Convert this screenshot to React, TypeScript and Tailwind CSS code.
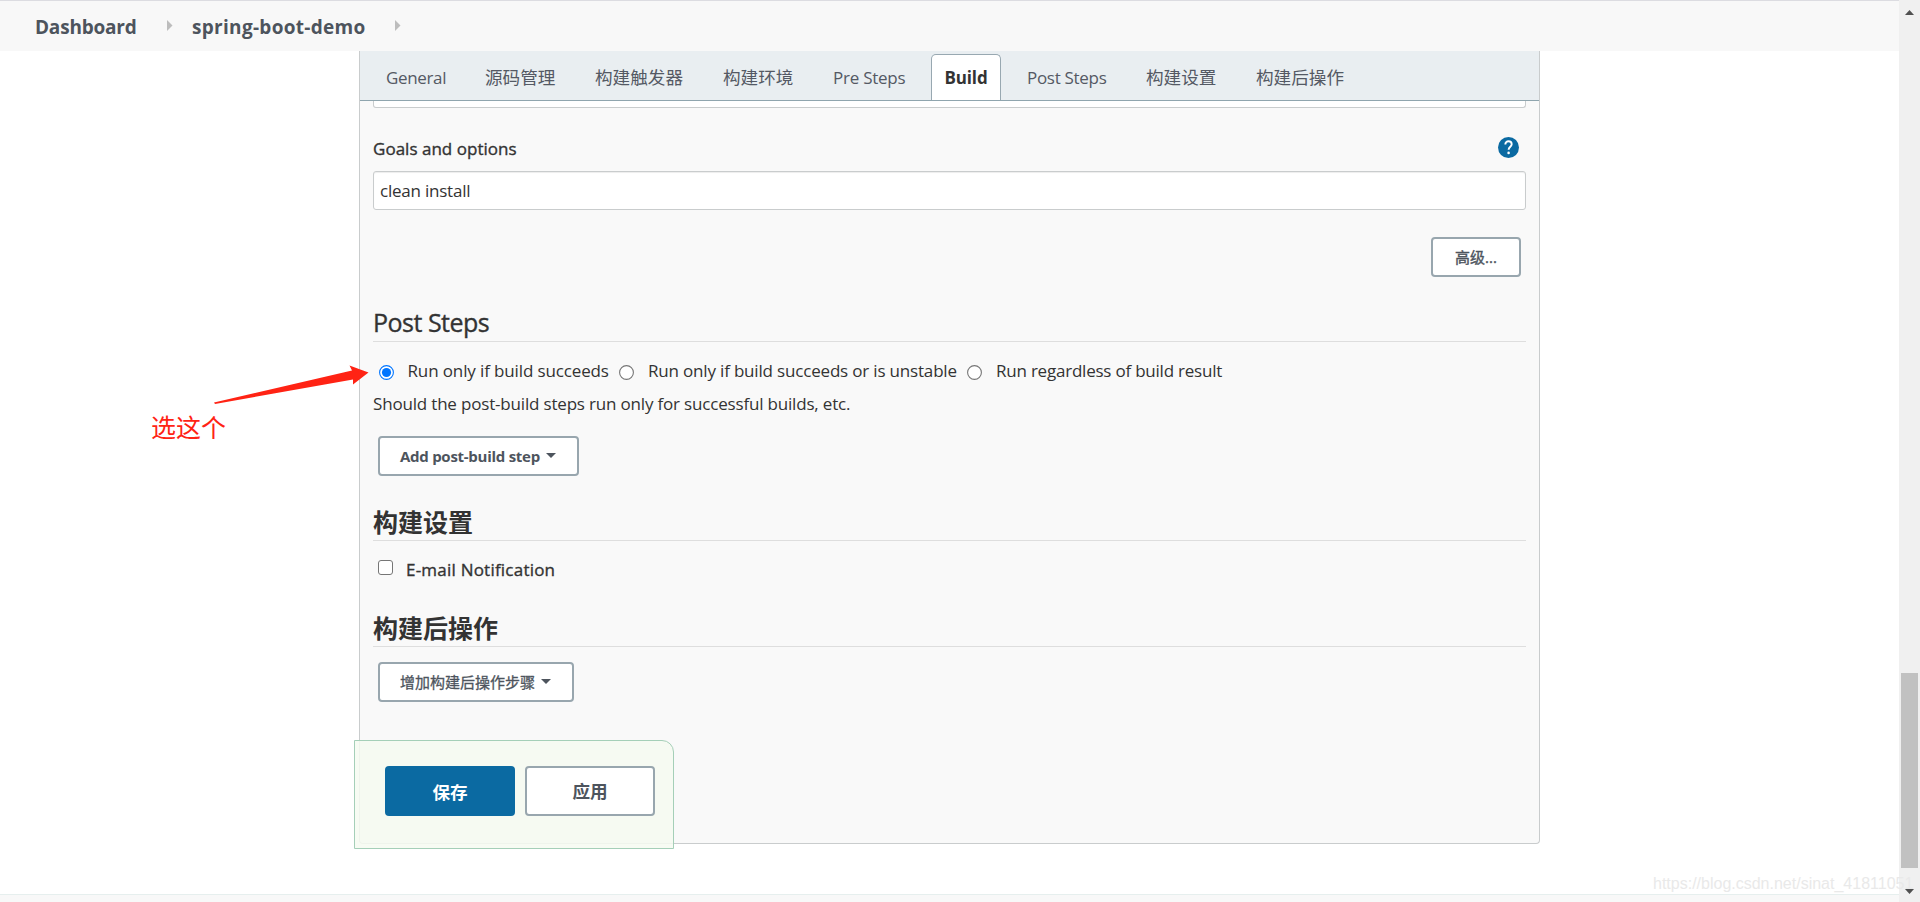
import type { ReactNode } from "react";

const sans = 'font-["Open_Sans","Noto_Sans_CJK_SC",sans-serif]';

function Crumb() {
  return (
    <svg width="6" height="11" viewBox="0 0 6 11" className="mb-[1px] shrink-0 fill-[#bdbdbd]">
      <path d="M0 0L5.5 5.5L0 11Z" />
    </svg>
  );
}

function Caret({ className }: { className: string }) {
  return (
    <svg width="10" height="5" viewBox="0 0 10 5" className={`shrink-0 fill-[#4d545d] ${className}`}>
      <path d="M0 0H10L5 5Z" />
    </svg>
  );
}

function Tab({ children, className }: { children: ReactNode; className: string }) {
  return <a className={`shrink-0 whitespace-nowrap ${className}`}>{children}</a>;
}

function Heading({ children, className }: { children: ReactNode; className: string }) {
  return (
    <h2 className={`border-b border-[#dedede] leading-[34px] text-[25px] text-[#333] ${className}`}>{children}</h2>
  );
}

function Radio({ checked }: { checked?: boolean }) {
  return (
    <svg width="15" height="15" viewBox="0 0 15 15" className="mt-[3px] shrink-0">
      <circle cx="7.5" cy="7.5" r="6.9" fill="#fff" strokeWidth="1.1" className={checked ? "stroke-[#0075ff]" : "stroke-[#767676]"} />
      {checked && <circle cx="7.5" cy="7.5" r="4.6" fill="#0075ff" />}
    </svg>
  );
}

export default function App() {
  return (
    <div className={`relative flex h-[902px] w-[1920px] overflow-hidden bg-white text-[17px] text-[#333] ${sans}`}>
      <div className="flex w-[1899px] flex-col">
        <header className="flex h-[51px] shrink-0 items-center border-t border-[#dcdce1] bg-[#f8f8f8] pl-[35px] text-[19px] font-bold text-[#4d545d]">
          <span className="w-[132px] pt-[2px] tracking-[-0.2px]">Dashboard</span>
          <Crumb />
          <span className="ml-[19px] w-[203px] pt-[2px] tracking-[0.3px]">spring-boot-demo</span>
          <Crumb />
        </header>

        <main className="ml-[359px] flex h-[793px] w-[1181px] shrink-0 flex-col rounded-b-[4px] border-x border-b border-[#c9cccd] bg-[#f9f9f9]">
          <nav className="flex h-[50px] shrink-0 items-end border-b border-[#8fa5ae] bg-[#e9eef1] pl-[26px] text-[#545964]">
            <div className="flex h-[46px] items-center">
              <Tab className="w-[99px] pt-[1px] tracking-[-0.35px]">General</Tab>
              <Tab className="w-[110px] text-[17.6px]">源码管理</Tab>
              <Tab className="w-[128px] text-[17.6px]">构建触发器</Tab>
              <Tab className="w-[110px] text-[17.6px]">构建环境</Tab>
              <Tab className="w-[98px] pt-[1px] tracking-[-0.25px]">Pre Steps</Tab>
              <Tab className="flex h-[46px] w-[70px] items-center justify-center rounded-t-[5px] border border-b-0 border-[#98a8b1] bg-white font-bold tracking-[-0.1px] text-[#333]">Build</Tab>
              <Tab className="ml-[26px] w-[119px] pt-[1px] tracking-[-0.3px]">Post Steps</Tab>
              <Tab className="w-[110px] text-[17.6px]">构建设置</Tab>
              <Tab className="text-[17.6px]">构建后操作</Tab>
            </div>
          </nav>

          <div className="flex flex-col px-[13px]">
            <div className="h-[7px] rounded-b-[3px] border border-t-0 border-[#c9cccd] bg-white" />

            <div className="mt-[27px] flex h-[26px] items-center justify-between pr-[7px]">
              <label className="pt-[1px] tracking-[0.02px] [-webkit-text-stroke:0.35px]">Goals and options</label>
              <svg width="21" height="21" viewBox="0 0 21 21" fill="none" className="mb-[2px]">
                <circle cx="10.5" cy="10.5" r="10.5" fill="#0b6aa2" />
                <path d="M7.3 7.4C7.3 5.5 8.7 4.3 10.5 4.3S13.7 5.5 13.7 7.3C13.7 9.7 10.6 9.8 10.6 12.8" stroke="#fff" strokeWidth="1.9" />
                <circle cx="10.6" cy="15.9" r="1.3" fill="#fff" />
              </svg>
            </div>
            <div className="mt-[10px] flex h-[39px] items-center rounded-[3px] border border-[#c9cccd] bg-white pl-[6px] shadow-[inset_0_1px_1px_rgba(0,0,0,0.075)]">
              <span className="pt-[1px] tracking-[-0.22px]">clean install</span>
            </div>
            <button className="mt-[27px] mr-[5px] flex h-[40px] w-[90px] items-center justify-center self-end rounded-[4px] border-2 border-[#98a6ae] bg-white pt-[1px] text-[15px] text-[#4d545d] [-webkit-text-stroke:0.4px]">
              高级...
            </button>

            <Heading className="mt-[28px] h-[37px] tracking-[-0.5px] [-webkit-text-stroke:0.35px]">Post Steps</Heading>
            <div className="mt-[16px] flex h-[26px] items-center pl-[5.5px] whitespace-nowrap">
              <Radio checked />
              <span className="ml-[14px] w-[211.5px] tracking-[-0.13px]">Run only if build succeeds</span>
              <Radio />
              <span className="ml-[14px] w-[319px] tracking-[-0.18px]">Run only if build succeeds or is unstable</span>
              <Radio />
              <span className="ml-[14px] tracking-[-0.22px]">Run regardless of build result</span>
            </div>
            <p className="mt-[7px] h-[26px] leading-[26px] tracking-[-0.18px]">
              Should the post-build steps run only for successful builds, etc.
            </p>
            <button className="mt-[19px] ml-[5px] flex h-[40px] w-[201px] items-center rounded-[4px] border-2 border-[#98a6ae] bg-white pl-[20px] text-[15px] font-bold whitespace-nowrap text-[#4d545d]">
              <span className="w-[146px] text-left tracking-[-0.27px]">Add post-build step</span>
              <Caret className="mb-[1px]" />
            </button>

            <Heading className="mt-[29px] h-[36px] font-bold">构建设置</Heading>
            <div className="mt-[15px] flex h-[26px] items-center pl-[5px]">
              <span className="mb-[3px] size-[15px] rounded-[3px] border border-[#767676] bg-white" />
              <span className="ml-[13px] pt-[1px] tracking-[0.22px] [-webkit-text-stroke:0.35px]">E-mail Notification</span>
            </div>

            <Heading className="mt-[29px] h-[36px] font-bold">构建后操作</Heading>
            <button className="mt-[15px] ml-[5px] flex h-[40px] w-[196px] items-center rounded-[4px] border-2 border-[#98a6ae] bg-white pl-[20px] text-[15px] whitespace-nowrap text-[#4d545d]">
              <span className="w-[141px] text-left [-webkit-text-stroke:0.3px]">增加构建后操作步骤</span>
              <Caret className="mb-[2px]" />
            </button>
          </div>
        </main>

        <footer className="mt-[50px] h-[8px] shrink-0 border-t border-[#e6efee] bg-[#f8f8f8]" />
      </div>

      <aside className="flex w-[21px] flex-col items-center bg-[#f0f0f0]">
        <svg width="9" height="5" viewBox="0 0 9 5" className="mt-[10px] mr-[1px] fill-[#505050]">
          <path d="M0 5H9L4.5 0Z" />
        </svg>
        <div className="mt-[658px] mr-[1px] h-[195px] w-[17px] bg-[#c1c1c1]" />
        <svg width="9" height="5" viewBox="0 0 9 5" className="mt-[21px] mr-[1px] fill-[#505050]">
          <path d="M0 0H9L4.5 5Z" />
        </svg>
      </aside>

      <div className="absolute top-[740px] left-[354px] flex h-[109px] w-[320px] gap-[10px] rounded-tr-[12px] border border-[#a5cfb8] bg-[#f6faf1]/85 pt-[25px] pl-[30px] text-[17.6px] font-bold">
        <button className="h-[50px] w-[130px] rounded-[4px] bg-[#0b6aa2] pt-[2px] text-white">保存</button>
        <button className="h-[50px] w-[130px] rounded-[4px] border-2 border-[#98a6ae] bg-white pt-[1px] text-[#4d545d]">应用</button>
      </div>

      <svg width="156" height="41" viewBox="0 0 156 41" className="absolute top-[364px] left-[213px] fill-[#ff2314]">
        <path d="M1 38.5L139 6.5L136.5 1.5L155.5 8.5L140 20.5L140 15.5L2 40Z" />
      </svg>
      <div className="absolute top-[409px] left-[151px] text-[25px] leading-[36px] text-[#ff2314]">选这个</div>
      <div className="absolute top-[874px] left-[1653px] font-['Liberation_Sans',sans-serif] text-[16px] leading-[20px] text-[#e9e9e9]">
        https://blog.csdn.net/sinat_41811051
      </div>
    </div>
  );
}
